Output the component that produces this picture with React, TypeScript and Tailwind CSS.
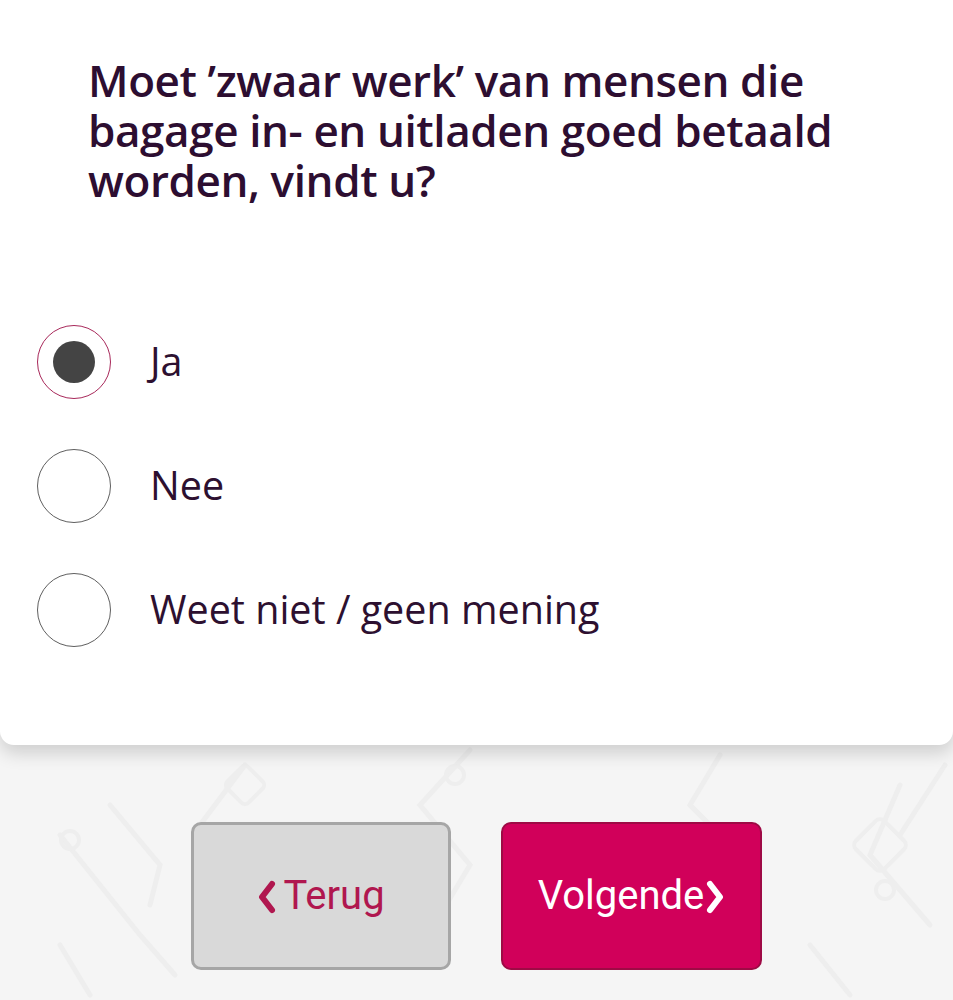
import { useState } from "react";

const options = ["Ja", "Nee", "Weet niet / geen mening"];

function Chevron({ dir, className }: { dir: "left" | "right"; className?: string }) {
  return (
    <svg viewBox="0 0 20 34" className={className} fill="none">
      <polyline
        points={dir === "left" ? "15,4 5,17 15,30" : "5,4 15,17 5,30"}
        stroke="currentColor"
        strokeWidth="6"
        strokeLinecap="round"
        strokeLinejoin="round"
      />
    </svg>
  );
}

function Pattern() {
  // faint circuit-like decoration behind the buttons
  return (
    <svg className="absolute inset-0 w-full h-full" viewBox="0 0 953 255" preserveAspectRatio="none" fill="none">
      <g stroke="#eeeeee" strokeWidth="5" strokeLinecap="round">
        <path d="M60 90 L140 190 L175 230" />
        <path d="M110 60 L160 120 L150 160" />
        <path d="M245 20 L200 80 L240 130" />
        <path d="M470 5 L420 60 L470 120 L440 170" />
        <path d="M720 10 L690 60 L740 110" />
        <path d="M900 40 L870 110 L930 180" />
        <path d="M945 20 L900 90" />
        <path d="M810 200 L850 250" />
        <path d="M60 200 L90 250" />
      </g>
      <g stroke="#eeeeee" strokeWidth="4">
        <circle cx="70" cy="95" r="9" />
        <circle cx="455" cy="30" r="9" />
        <circle cx="885" cy="145" r="9" />
        <rect x="860" y="80" width="40" height="40" rx="6" transform="rotate(45 880 100)" />
        <rect x="230" y="25" width="30" height="30" rx="5" transform="rotate(45 245 40)" />
      </g>
    </svg>
  );
}

export default function App() {
  const [selected, setSelected] = useState(0);

  return (
    <div className="w-[953px] h-[1000px] bg-[#f5f5f5] overflow-hidden flex flex-col">
      {/* Question card */}
      <div className="relative z-10 bg-white rounded-b-[14px] shadow-[0_8px_18px_rgba(0,0,0,0.16)] pt-[55px] pb-[73px]">
        <h1 className="px-[88px] text-[44px] leading-[50px] font-semibold text-[#2d0e31] tracking-[-0.4px] font-['Open_Sans',sans-serif]">
          Moet ’zwaar werk’ van mensen die bagage in- en uitladen goed betaald worden, vindt u?
        </h1>

        <div className="mt-[95px] flex flex-col">
          {options.map((opt, i) => (
            <button
              key={opt}
              onClick={() => setSelected(i)}
              className="h-[124px] flex items-center pl-[37px] text-left"
            >
              <span
                className={`w-[74px] h-[74px] rounded-full flex items-center justify-center border-[1.5px] ${
                  selected === i ? "border-[#a8285a]" : "border-[#5f5f5f]"
                }`}
              >
                {selected === i && <span className="w-[42px] h-[42px] rounded-full bg-[#444444]" />}
              </span>
              <span className="ml-[39px] text-[39.5px] text-[#2d1030] font-['Open_Sans',sans-serif]">{opt}</span>
            </button>
          ))}
        </div>
      </div>

      {/* Navigation */}
      <div className="relative flex-1">
        <Pattern />
        <div className="relative flex justify-center gap-[50px] pt-[77px] font-['Roboto',sans-serif]">
          <button className="w-[260px] h-[148px] rounded-[10px] bg-[#d9d9d9] border-[3px] border-[#a6a6a6] flex items-center justify-center gap-[6px] text-[#b0174f] text-[40px]">
            <Chevron dir="left" className="w-[20px] h-[34px] mt-[2px]" />
            <span>Terug</span>
          </button>
          <button className="w-[261px] h-[148px] rounded-[10px] bg-[#d1005a] border-2 border-[#9e0a45] flex items-center justify-center gap-[1px] text-white text-[40px]">
            <span>Volgende</span>
            <Chevron dir="right" className="w-[20px] h-[34px] mt-[2px]" />
          </button>
        </div>
      </div>
    </div>
  );
}
